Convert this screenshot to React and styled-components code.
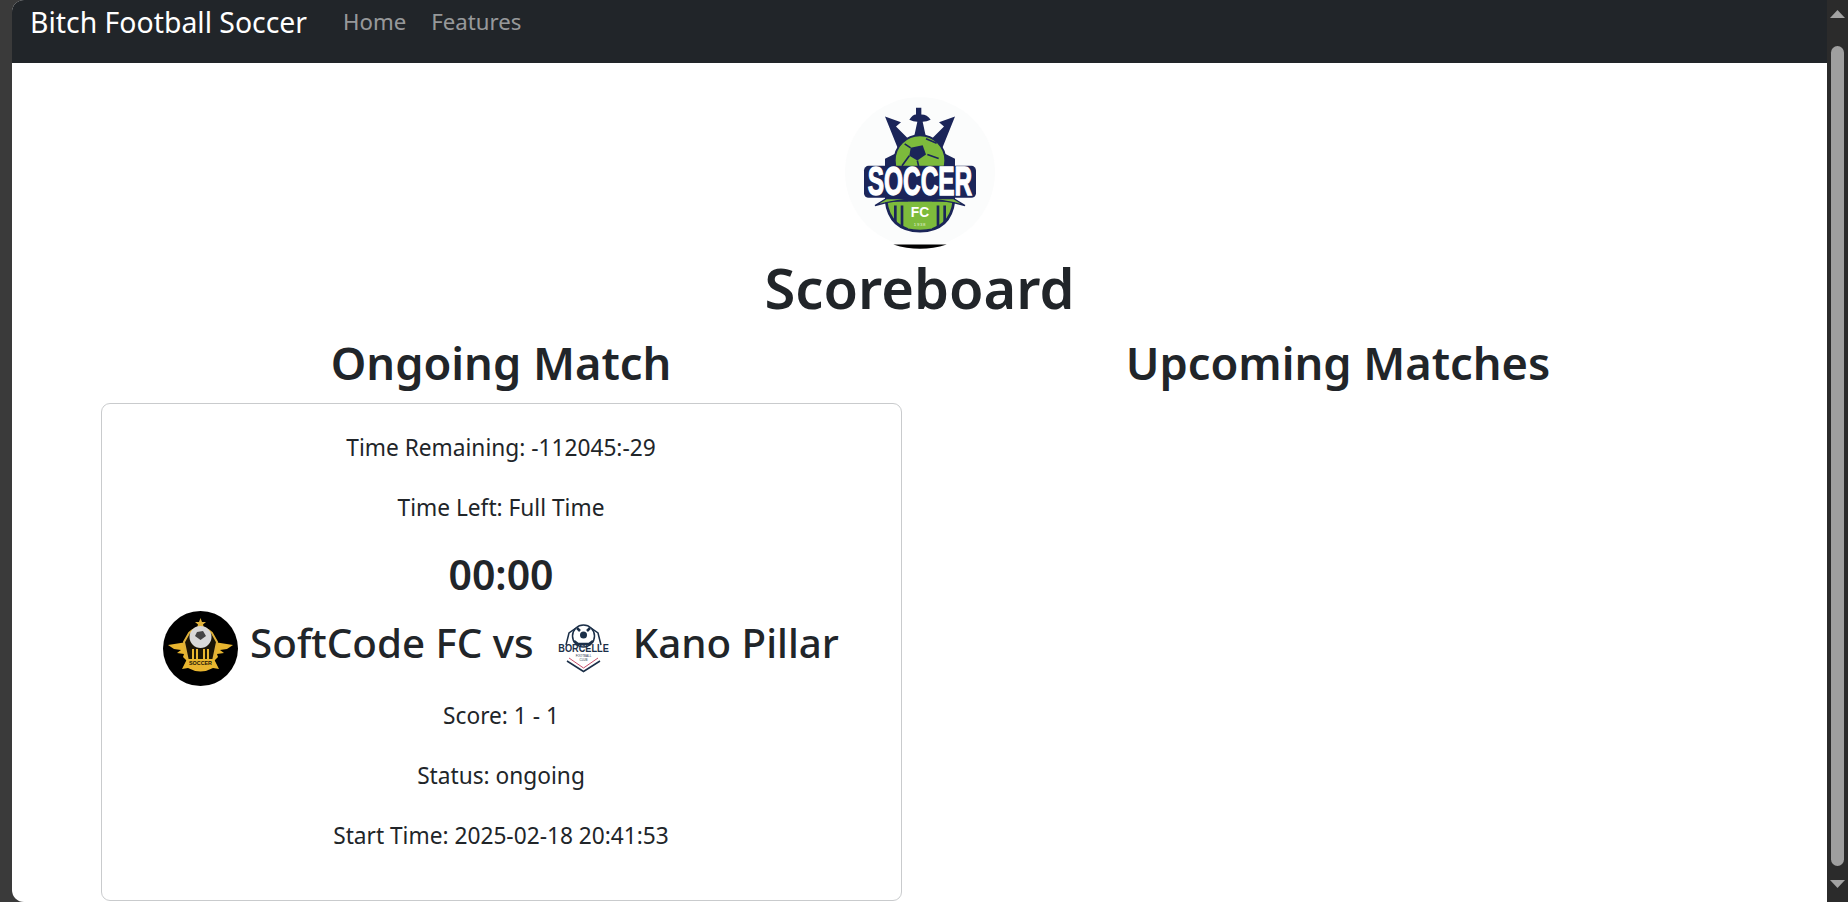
import React from "react";
import styled, {createGlobalStyle} from "styled-components";

const GlobalStyle = createGlobalStyle`
  html, body {
    margin: 0;
    height: 100%;
    overflow: hidden;
    background: #3a3a3a;
  }
  #root {
    height: 100%;
  }
`;

const SoccerLogo = () => (
    <LogoSvg viewBox="75 20 450 470">
        <circle cx="300" cy="245" r="225" fill="#fbfcfc"/>
        <path d="M220 462 H380 Q300 488 220 462 Z" fill="#000"/>
        <path d="M195 78 L243 95 L228 108 L270 150 L240 190 Z" fill="#1b2559"/>
        <path d="M405 78 L357 95 L372 108 L330 150 L360 190 Z" fill="#1b2559"/>
        <path
            d="M288 52 H304 V72 Q322 72 332 88 Q320 94 308 94 L318 140 H282 L292 94 Q280 94 268 88 Q278 72 288 72 Z"
            fill="#1b2559"/>
        <path d="M195 205 L225 190 H375 L405 205 V330 H195 Z" fill="#1b2559"/>
        <circle cx="300" cy="210" r="76" fill="#7dbb3c" stroke="#1b2559" strokeWidth="6"/>
        <path d="M272 172 L308 164 L318 192 L292 210 L268 196 Z" fill="#1b2559"/>
        <path d="M318 145 L350 158 M322 192 L356 204 M268 196 L246 226 M292 210 L300 246 M272 172 L254 160"
              stroke="#1b2559" strokeWidth="5" fill="none"/>
        <path d="M198 330 H402 Q392 420 300 422 Q208 420 198 330 Z" fill="#7dbb3c" stroke="#1b2559" strokeWidth="8"/>
        <path d="M226 345 V396 M246 345 V410 M354 345 V410 M374 345 V396" stroke="#1b2559" strokeWidth="8"/>
        <rect x="264" y="334" width="72" height="80" fill="#7dbb3c"/>
        <rect x="132" y="226" width="336" height="96" rx="14" fill="#1b2559"/>
        <path d="M165 345 Q300 305 435 345 L400 324 H200 Z" fill="#7dbb3c" stroke="#1b2559" strokeWidth="4"/>
        <SoccerWord transform="translate(300 313) scale(.6 1)">SOCCER</SoccerWord>
        <BadgeLetters transform="translate(300 380) scale(.9 1)">FC</BadgeLetters>
        <BadgeYear x="300" y="405">1938</BadgeYear>
    </LogoSvg>
);

const HomeTeamLogo = () => (
    <TeamSvg viewBox="0 0 75 75">
        <circle cx="37.5" cy="37.5" r="37.5" fill="#000"/>
        <path d="M37.5 7 L39 11 L43 11 L40 13.5 L41 17 L37.5 15 L34 17 L35 13.5 L32 11 L36 11 Z" fill="#e0b13a"/>
        <path d="M5 34 L24 31 V50 L20 46 L21 43 L14 42 L18 39 L11 38 Z" fill="#e8b52f"/>
        <path d="M70 34 L51 31 V50 L55 46 L54 43 L61 42 L57 39 L64 38 Z" fill="#e8b52f"/>
        <path d="M26 22 Q37.5 11 49 22 L54 31 L50 50 H25 L21 31 Z" fill="#1a1405" stroke="#e0b13a" strokeWidth="2"/>
        <path d="M30 38 V49 M34 38 V49 M41 38 V49 M45 38 V49" stroke="#e8b52f" strokeWidth="2"/>
        <circle cx="37.5" cy="26" r="11" fill="#d8d8d8"/>
        <path d="M34 21 L40 20 L43 25 L37.5 29 L32 25 Z" fill="#444"/>
        <path d="M24 48 H51 L56 58 L50 57 Q37.5 64 25 57 L19 58 Z" fill="#e8b52f"/>
        <TeamBanner transform="translate(37.5 54) scale(.9 1)">SOCCER</TeamBanner>
    </TeamSvg>
);

const AwayTeamLogo = () => (
    <TeamSvg viewBox="0 0 75 75">
        <path d="M20 34 L23 22 L30 17 M55 34 L52 22 L45 17" stroke="#1b2f48" strokeWidth="1.5" fill="none"/>
        <circle cx="37.5" cy="25" r="11" fill="#fff" stroke="#1b2f48" strokeWidth="1.5"/>
        <circle cx="37.5" cy="24" r="3.5" fill="#1b2f48"/>
        <path d="M28 30 L32 33 H43 L47 30 M31 17 L34 20 M44 17 L41 20" stroke="#1b2f48" strokeWidth="2.5" fill="none"/>
        <path d="M21 42 H54 V50 L37.5 60 L21 50 Z" fill="#fff"/>
        <path d="M23 47 L37.5 57 L52 47" stroke="#c9506a" strokeWidth="1" fill="none"/>
        <path d="M21 50 L37.5 60.5 L54 50" stroke="#1b2f48" strokeWidth="1.5" fill="none"/>
        <ClubWord transform="translate(37.5 40.5) scale(.92 1)">BORCELLE</ClubWord>
        <ClubSmall x="37.5" y="46">FOOTBALL</ClubSmall>
        <ClubSmall x="37.5" y="50">CLUB</ClubSmall>
    </TeamSvg>
);

const ScrollArrow = ({down}) => (
    <svg width="15" height="8" viewBox="0 0 15 8">
        <path d={down ? "M0 0 H15 L7.5 8 Z" : "M0 8 H15 L7.5 0 Z"} fill="#a3a3a3"/>
    </svg>
);

export default function App() {
    return (
        <Frame>
            <GlobalStyle/>
            <Page>
                <Navbar>
                    <Brand>Bitch Football Soccer</Brand>
                    <NavLink>Home</NavLink>
                    <NavLink>Features</NavLink>
                </Navbar>
                <Content>
                    <SoccerLogo/>
                    <Title>Scoreboard</Title>
                    <Columns>
                        <Column>
                            <SectionTitle>Ongoing Match</SectionTitle>
                            <MatchCard>
                                <InfoLine>Time Remaining: -112045:-29</InfoLine>
                                <InfoLine>Time Left: Full Time</InfoLine>
                                <Clock>00:00</Clock>
                                <Teams>
                                    <HomeTeamLogo/>
                                    <span>SoftCode FC vs</span>
                                    <AwayTeamLogo/>
                                    <span>Kano Pillar</span>
                                </Teams>
                                <InfoLine>Score: 1 - 1</InfoLine>
                                <InfoLine>Status: ongoing</InfoLine>
                                <InfoLine>Start Time: 2025-02-18 20:41:53</InfoLine>
                            </MatchCard>
                        </Column>
                        <Column>
                            <SectionTitle>Upcoming Matches</SectionTitle>
                        </Column>
                    </Columns>
                </Content>
            </Page>
            <Scrollbar>
                <ScrollArrow/>
                <Thumb/>
                <ScrollArrow down/>
            </Scrollbar>
        </Frame>
    );
}

const Frame = styled.div`
  display: flex;
  height: 902px;
  padding-left: 12px;
  box-sizing: border-box;
  background: #3a3a3a;
  font-family: "Noto Sans", "Open Sans", sans-serif;
  color: #212529;
`;

const Page = styled.div`
  flex: 1;
  min-width: 0;
  height: 902px;
  overflow: hidden;
  background: #fff;
  border-radius: 12px 0 0 12px;
`;

const Navbar = styled.nav`
  display: flex;
  align-items: flex-start;
  height: 63px;
  box-sizing: border-box;
  padding: 3px 0 0 18px;
  background: #212529;
`;

const Brand = styled.a`
  margin-right: 36px;
  font-size: 28.4px;
  line-height: 38px;
  color: #fff;
`;

const NavLink = styled.a`
  margin-right: 25px;
  font-size: 22.2px;
  line-height: 38px;
  color: rgba(255, 255, 255, 0.55);
`;

const Content = styled.main`
  display: flex;
  flex-direction: column;
  align-items: center;
`;

const LogoSvg = styled.svg`
  display: block;
  width: 150px;
  height: 157px;
  margin-top: 34px;
`;

const Title = styled.h1`
  margin: -3px 0 11px;
  font-size: 56px;
  font-weight: 600;
  line-height: 72px;
`;

const Columns = styled.div`
  display: grid;
  grid-template-columns: 837px 837px;
`;

const Column = styled.section`
  padding: 0 18px;
`;

const SectionTitle = styled.h2`
  margin: 0 0 11px;
  font-size: 45.2px;
  font-weight: 600;
  line-height: 58px;
  text-align: center;
`;

const MatchCard = styled.div`
  box-sizing: border-box;
  width: 801px;
  height: 498px;
  padding: 29px 0 0;
  border: 1px solid #c9cbcd;
  border-radius: 9px;
  text-align: center;
`;

const InfoLine = styled.p`
  margin: 0 0 29.8px;
  font-size: 22.7px;
  line-height: 30px;
`;

const Clock = styled.div`
  margin: -2.5px 0 0;
  font-size: 41px;
  font-weight: 600;
  line-height: 48px;
`;

const Teams = styled.div`
  display: flex;
  align-items: center;
  justify-content: center;
  gap: 12px;
  height: 88px;
  margin-bottom: 15px;
  font-size: 40.3px;
  font-weight: 500;
`;

const TeamSvg = styled.svg`
  flex: none;
  width: 75px;
  height: 75px;
  margin-top: 12px;
`;

const Scrollbar = styled.aside`
  flex: none;
  display: flex;
  flex-direction: column;
  align-items: center;
  box-sizing: border-box;
  width: 21px;
  padding: 10px 0 14px;
  background: #2b2b2b;
`;

const Thumb = styled.div`
  flex: 1;
  width: 13px;
  margin: 28px 0 14px;
  border-radius: 7px;
  background: #9f9f9f;
`;

const SoccerWord = styled.text`
  font-family: "Liberation Sans", sans-serif;
  font-size: 122px;
  font-weight: 700;
  text-anchor: middle;
  fill: #fff;
  stroke: #fff;
  stroke-width: 4px;
`;

const BadgeLetters = styled.text`
  font-family: "Liberation Sans", sans-serif;
  font-size: 46px;
  font-weight: 700;
  text-anchor: middle;
  fill: #fff;
`;

const BadgeYear = styled.text`
  font-family: "Liberation Sans", sans-serif;
  font-size: 13px;
  letter-spacing: 2px;
  text-anchor: middle;
  fill: #e6f2d6;
`;

const TeamBanner = styled.text`
  font-family: "Liberation Sans", sans-serif;
  font-size: 6px;
  font-weight: 700;
  text-anchor: middle;
  fill: #1a1405;
`;

const ClubWord = styled.text`
  font-family: "Liberation Sans", sans-serif;
  font-size: 10px;
  font-weight: 700;
  text-anchor: middle;
  fill: #1b2f48;
`;

const ClubSmall = styled.text`
  font-family: "Liberation Sans", sans-serif;
  font-size: 3px;
  text-anchor: middle;
  fill: #1b2f48;
`;
